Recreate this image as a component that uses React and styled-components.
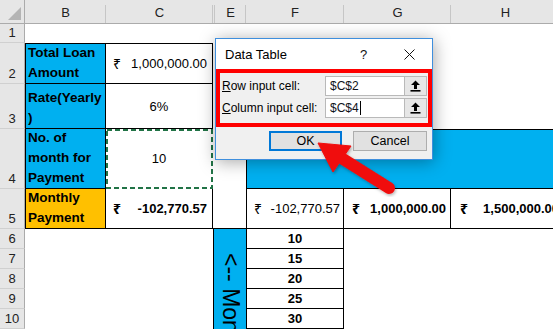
import React from 'react';
import styled, { createGlobalStyle, css } from 'styled-components';

const GlobalStyle = createGlobalStyle`
  html, body { margin: 0; padding: 0; background: #fff; }
  body {
    font-family: "Liberation Sans", "Noto Sans", "DejaVu Sans", sans-serif;
    overflow: hidden;
  }
  * { box-sizing: border-box; }
`;

const CYAN = '#00b0f0';
const ORANGE = '#ffc000';

const Page = styled.div`
  position: relative;
  width: 553px;
  height: 330px;
  overflow: hidden;
  background: #fff;
`;

const Sheet = styled.div`
  display: grid;
  grid-template-columns: 25px 81px 107px 2px 31px 98px 107px 109px;
  grid-template-rows: 24px 19px 41px 45px 60px 40px repeat(5, 20px);
  width: 560px;
  font-size: 13px;
  color: #000;
`;

const headBg = css`
  background: #e6e6e6;
  color: #222;
  font-size: 13px;
`;

const Corner = styled.div`
  ${headBg};
  position: relative;
  border-right: 1px solid #ababab;
  border-bottom: 1px solid #ababab;
  &::after {
    content: '';
    position: absolute;
    right: 3px;
    bottom: 3px;
    width: 13px;
    height: 13px;
    background: #b4b4b4;
    clip-path: polygon(100% 0, 100% 100%, 0 100%);
  }
`;

const ColHead = styled.div`
  ${headBg};
  position: relative;
  display: flex;
  align-items: center;
  justify-content: center;
  padding-top: 2px;
  border-bottom: 1px solid #ababab;
  &::after {
    content: '';
    position: absolute;
    right: 0;
    top: 5px;
    bottom: 0;
    width: 1px;
    background: #c6c6c6;
  }
`;

const RowHead = styled.div`
  ${headBg};
  grid-column: 1;
  grid-row: ${(p) => p.$row};
  display: flex;
  align-items: flex-end;
  justify-content: center;
  padding-bottom: 1px;
  line-height: 16px;
  border-right: 1px solid #ababab;
  border-bottom: 1px solid #d0d0d0;
`;

const cellBase = css`
  grid-row: ${(p) => p.$row};
  grid-column: ${(p) => p.$col};
  border-style: solid;
  border-color: #000;
  border-width: ${(p) => p.$b || '0'};
  overflow: ${(p) => (p.$overlay ? 'visible' : 'hidden')};
  white-space: nowrap;
`;

const LabelCell = styled.div`
  ${cellBase};
  background: ${(p) => p.$bg};
  display: flex;
  flex-direction: column;
  justify-content: flex-end;
  padding: 0 2px;
  font-weight: 700;
  font-size: 13.5px;
  line-height: 20px;
`;

const CenterCell = styled.div`
  ${cellBase};
  position: relative;
  display: flex;
  align-items: center;
  justify-content: center;
  font-weight: ${(p) => (p.$bold ? 700 : 400)};
`;

const Marquee = styled.svg`
  position: absolute;
  top: 0;
  left: 0;
  pointer-events: none;
`;

const AmountCell = styled.div`
  ${cellBase};
  display: flex;
  align-items: center;
  justify-content: space-between;
  padding: 0 ${(p) => p.$pr}px 0 ${(p) => p.$pl}px;
  font-weight: ${(p) => (p.$bold ? 700 : 400)};
`;

const Rupee = styled.span`
  font-family: "Noto Sans", "DejaVu Sans", sans-serif;
  font-size: 14px;
`;

const Figure = styled.span``;

const BandCell = styled.div`
  ${cellBase};
  background: ${CYAN};
`;

const BlankCell = styled.div`
  ${cellBase};
`;

const VerticalCell = styled.div`
  ${cellBase};
  background: ${CYAN};
  display: flex;
  justify-content: center;
  align-items: flex-start;
  padding-top: 24px;
`;

const VerticalText = styled.span`
  writing-mode: vertical-rl;
  font-size: 23px;
  line-height: 1;
  white-space: nowrap;
`;

/* ---------- Dialog ---------- */

const Dialog = styled.div`
  position: absolute;
  left: 215px;
  top: 38px;
  width: 218px;
  height: 122px;
  border: 1px solid #3f8fdd;
  background: #f0f0f0;
  box-shadow: 1px 2px 16px rgba(0, 0, 0, 0.35);
  display: flex;
  flex-direction: column;
  font-family: "Liberation Sans", "Noto Sans", sans-serif;
  font-size: 12px;
  color: #000;
`;

const TitleBar = styled.div`
  height: 30px;
  flex: none;
  background: #fff;
  display: flex;
  align-items: center;
  padding-left: 9px;
`;

const Title = styled.span`
  font-size: 13px;
  padding-top: 1px;
`;

const TitleButton = styled.div`
  width: ${(p) => p.$w}px;
  height: 30px;
  display: flex;
  align-items: center;
  justify-content: center;
  font-size: 13px;
  color: #111;
  ${(p) => p.$first && 'margin-left: auto;'}
`;

const Highlight = styled.div`
  height: 58px;
  border: 4px solid #ff0000;
  padding: 3px 0 0 2px;
  display: flex;
  flex-direction: column;
  gap: 2px;
`;

const FieldRow = styled.div`
  display: flex;
  align-items: center;
  height: 20px;
`;

const FieldLabel = styled.span`
  width: 103px;
  u { text-decoration: underline; text-underline-offset: 1px; }
`;

const RefBox = styled.div`
  display: flex;
  width: 102px;
  height: 20px;
`;

const RefInput = styled.div`
  flex: 1;
  background: #fff;
  border: 1px solid #b9b9b9;
  display: flex;
  align-items: center;
  padding-left: 4px;
  font-size: 12px;
  color: #10131a;
`;

const Caret = styled.span`
  display: inline-block;
  width: 1px;
  height: 14px;
  background: #000;
  margin-left: 1px;
`;

const RefButton = styled.div`
  width: 22px;
  background: #e6e6e6;
  border: 1px solid #b9b9b9;
  border-left: none;
  display: flex;
  align-items: center;
  justify-content: center;
`;

const ButtonRow = styled.div`
  display: flex;
  justify-content: flex-end;
  gap: 11px;
  padding: 4px 5px 0 0;
`;

const DialogButton = styled.div`
  width: ${(p) => (p.$primary ? 73 : 74)}px;
  height: 20px;
  background: #e1e1e1;
  border: ${(p) => (p.$primary ? '2px solid #0078d7' : '1px solid #adadad')};
  display: flex;
  align-items: center;
  justify-content: center;
  font-size: 12.5px;
`;

const ArrowLayer = styled.svg`
  position: absolute;
  left: 0;
  top: 0;
  pointer-events: none;
`;

const UploadIcon = () => (
  <svg width="11" height="12" viewBox="0 0 11 12">
    <path d="M5.5 0.5 L10 5 L7 5 L7 9 L4 9 L4 5 L1 5 Z" fill="#000" />
    <rect x="0.5" y="10" width="10" height="1.6" fill="#000" />
  </svg>
);

const CloseIcon = () => (
  <svg width="11" height="11" viewBox="0 0 11 11">
    <path d="M0.5 0.5 L10.5 10.5 M10.5 0.5 L0.5 10.5" stroke="#111" strokeWidth="1" />
  </svg>
);

const columns = [
  { l: 'B', c: 2 },
  { l: 'C', c: 3 },
  { l: '', c: 4 },
  { l: 'E', c: 5 },
  { l: 'F', c: 6 },
  { l: 'G', c: 7 },
  { l: 'H', c: 8 },
];

const labels = [
  { row: 3, lines: ['Total Loan', 'Amount'], bg: CYAN, b: '1px 1px 1px 1px' },
  { row: 4, lines: ['Rate(Yearly', ')'], bg: CYAN, b: '0 1px 1px 1px' },
  { row: 5, lines: ['No. of', 'month for', 'Payment'], bg: CYAN, b: '0 1px 1px 1px' },
  { row: 6, lines: ['Monthly', 'Payment'], bg: ORANGE, b: '0 1px 1px 1px' },
];

const months = [10, 15, 20, 25, 30];

export default function App() {
  return (
    <Page>
      <GlobalStyle />
      <Sheet>
        <Corner />
        {columns.map((c) => (
          <ColHead key={c.c}>{c.l}</ColHead>
        ))}
        {Array.from({ length: 10 }, (_, i) => (
          <RowHead key={i} $row={i + 2}>
            {i + 1}
          </RowHead>
        ))}

        {labels.map((l) => (
          <LabelCell key={l.row} $row={l.row} $col={2} $bg={l.bg} $b={l.b}>
            {l.lines.map((t) => (
              <span key={t}>{t}</span>
            ))}
          </LabelCell>
        ))}

        <AmountCell $row={3} $col={3} $b="1px 1px 1px 0" $pl={7} $pr={5}>
          <Rupee>₹</Rupee>
          <Figure>1,000,000.00</Figure>
        </AmountCell>
        <CenterCell $row={4} $col={3} $b="0 1px 1px 0">6%</CenterCell>
        <CenterCell $row={5} $col={3} $b="0 1px 1px 0" $overlay>
          10
          <Marquee width="107" height="60" viewBox="0 0 107 60">
            <rect x="1" y="1" width="105" height="58" fill="none" stroke="#fff" strokeWidth="2" />
            <rect
              x="1"
              y="1"
              width="105"
              height="58"
              fill="none"
              stroke="#217346"
              strokeWidth="2"
              strokeDasharray="5 3"
            />
          </Marquee>
        </CenterCell>
        <AmountCell $row={6} $col={3} $b="0 1px 1px 0" $pl={7} $pr={5} $bold>
          <Rupee>₹</Rupee>
          <Figure>-102,770.57</Figure>
        </AmountCell>

        <BandCell $row={5} $col="6 / 9" $b="1px 0 1px 1px" />

        <BlankCell $row={6} $col="4 / 6" $b="0 0 1px 0" />
        <AmountCell $row={6} $col={6} $b="0 1px 1px 1px" $pl={7} $pr={3}>
          <Rupee>₹</Rupee>
          <Figure>-102,770.57</Figure>
        </AmountCell>
        <AmountCell $row={6} $col={7} $b="0 1px 1px 0" $pl={8} $pr={4} $bold>
          <Rupee>₹</Rupee>
          <Figure>1,000,000.00</Figure>
        </AmountCell>
        <AmountCell $row={6} $col={8} $b="0 1px 1px 0" $pl={9} $pr={0} $bold>
          <Rupee>₹</Rupee>
          <Figure>1,500,000.00</Figure>
        </AmountCell>

        <VerticalCell $row="7 / 12" $col="4 / 6" $b="0 0 0 1px">
          <VerticalText>{'<-- Months of payment'}</VerticalText>
        </VerticalCell>
        {months.map((m, i) => (
          <CenterCell key={m} $row={i + 7} $col={6} $b="0 1px 1px 1px" $bold>
            {m}
          </CenterCell>
        ))}
      </Sheet>

      <Dialog>
        <TitleBar>
          <Title>Data Table</Title>
          <TitleButton $w={45} $first>?</TitleButton>
          <TitleButton $w={46}>
            <CloseIcon />
          </TitleButton>
        </TitleBar>
        <Highlight>
          <FieldRow>
            <FieldLabel>
              <u>R</u>ow input cell:
            </FieldLabel>
            <RefBox>
              <RefInput>$C$2</RefInput>
              <RefButton>
                <UploadIcon />
              </RefButton>
            </RefBox>
          </FieldRow>
          <FieldRow>
            <FieldLabel>
              <u>C</u>olumn input cell:
            </FieldLabel>
            <RefBox>
              <RefInput>
                $C$4
                <Caret />
              </RefInput>
              <RefButton>
                <UploadIcon />
              </RefButton>
            </RefBox>
          </FieldRow>
        </Highlight>
        <ButtonRow>
          <DialogButton $primary>OK</DialogButton>
          <DialogButton>Cancel</DialogButton>
        </ButtonRow>
      </Dialog>

      <ArrowLayer width="553" height="330" viewBox="0 0 553 330">
        <defs>
          <filter id="arrowShadow" x="-20%" y="-20%" width="140%" height="140%">
            <feDropShadow dx="1" dy="1.5" stdDeviation="1.5" floodColor="#000" floodOpacity="0.3" />
          </filter>
        </defs>
        <g filter="url(#arrowShadow)" fill="#f00e0e" stroke="#f00e0e">
          <line x1="343" y1="159" x2="389" y2="188" strokeWidth="12" strokeLinecap="round" />
          <polygon points="318,143 333,172 351,146" strokeWidth="1" strokeLinejoin="round" />
        </g>
      </ArrowLayer>
    </Page>
  );
}
